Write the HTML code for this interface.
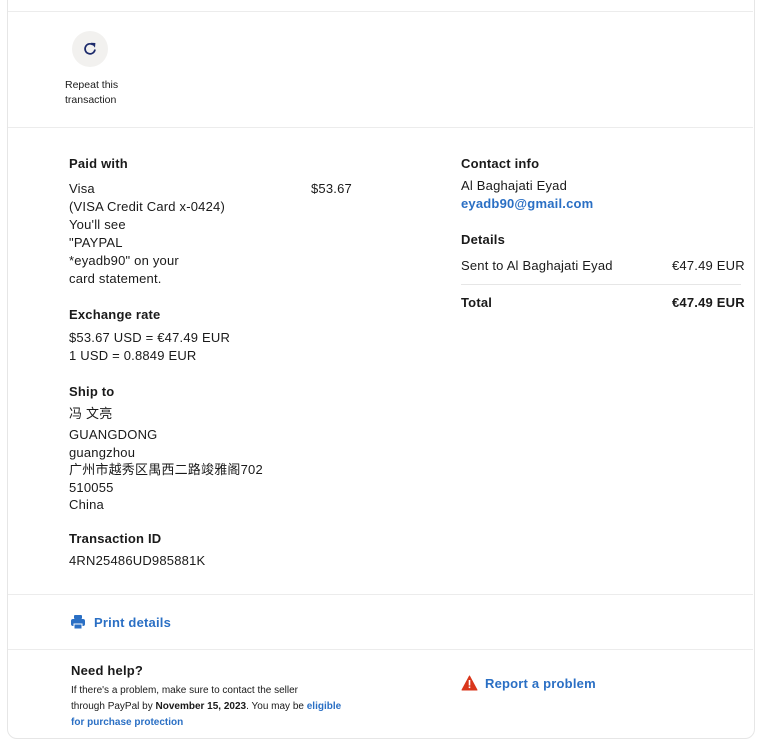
<!DOCTYPE html>
<html><head><meta charset="utf-8"><style>
body{margin:0;width:764px;height:740px;background:#fff;font-family:"Liberation Sans","Noto Sans CJK SC",sans-serif;color:#1a1a1a;position:relative;overflow:hidden}
.card{position:absolute;left:7px;top:-10px;width:746px;height:747px;border:1px solid #e6e6e6;border-radius:10px;background:#fff}
.hr{position:absolute;left:8px;width:745px;height:1px;background:#ececec}
.a{position:absolute;font-size:13px;line-height:18px;white-space:nowrap;letter-spacing:0.2px}
.b{font-weight:bold}
.l{color:#2a6fc4;font-weight:bold}
.s{font-size:10px;line-height:16px;letter-spacing:0}
</style></head><body>
<div class="card"></div>
<div class="hr" style="top:11px"></div>
<div class="hr" style="top:127px"></div>
<div class="hr" style="top:594px"></div>
<div class="hr" style="top:649px"></div>
<div style="position:absolute;left:72px;top:31px;width:36px;height:36px;border-radius:50%;background:#f2f1ef"></div>
<svg style="position:absolute;left:82px;top:41px" width="16" height="16" viewBox="0 0 16 16"><path d="M13 8.5A5 5 0 1 1 11 3.8" fill="none" stroke="#1c2a6b" stroke-width="1.7"/><path d="M8.8 1.8l4.6 0.2-0.4 4.6z" fill="#1c2a6b"/></svg>
<div class="a s" style="left:65px;top:78px;font-size:10.5px;line-height:15px">Repeat this<br>transaction</div>

<div class="a b" style="left:69px;top:155px">Paid with</div>
<div class="a" style="left:69px;top:180px">Visa<br>(VISA Credit Card x-0424)<br>You'll see<br>"PAYPAL<br>*eyadb90" on your<br>card statement.</div>
<div class="a" style="left:311px;top:180px">$53.67</div>
<div class="a b" style="left:69px;top:306px">Exchange rate</div>
<div class="a" style="left:69px;top:329px">$53.67 USD = €47.49 EUR<br>1 USD = 0.8849 EUR</div>
<div class="a b" style="left:69px;top:383px">Ship to</div>
<div class="a" style="left:69px;top:405px">冯 文亮</div>
<div class="a" style="left:69px;top:426px;line-height:17.5px">GUANGDONG<br>guangzhou<br>广州市越秀区禺西二路竣雅阁702<br>510055<br>China</div>
<div class="a b" style="left:69px;top:530px">Transaction ID</div>
<div class="a" style="left:69px;top:552px">4RN25486UD985881K</div>

<div class="a b" style="left:461px;top:155px">Contact info</div>
<div class="a" style="left:461px;top:177px">Al Baghajati Eyad</div>
<div class="a l" style="left:461px;top:195px">eyadb90@gmail.com</div>
<div class="a b" style="left:461px;top:231px">Details</div>
<div class="a" style="left:461px;top:257px">Sent to Al Baghajati Eyad</div>
<div class="a" style="left:672px;top:257px">€47.49 EUR</div>
<div style="position:absolute;left:461px;top:284px;width:280px;height:1px;background:#e6e6e6"></div>
<div class="a b" style="left:461px;top:294px">Total</div>
<div class="a b" style="left:672px;top:294px">€47.49 EUR</div>

<svg style="position:absolute;left:70px;top:614px" width="16" height="16" viewBox="0 0 16 16"><rect x="4" y="1" width="8" height="4" rx="1" fill="#2a6fc4"/><rect x="1" y="5" width="14" height="7" rx="2" fill="#2a6fc4"/><rect x="4" y="10" width="8" height="5" fill="#2a6fc4" stroke="#fff" stroke-width="1"/></svg>
<div class="a l" style="left:94px;top:614px">Print details</div>

<div class="a b" style="left:71px;top:662px">Need help?</div>
<div class="a s" style="left:71px;top:683px">If there's a problem, make sure to contact the seller<br>through PayPal by <b>November 15, 2023</b>. You may be <span class="l">eligible</span><br><span class="l">for purchase protection</span></div>
<svg style="position:absolute;left:461px;top:675px" width="17" height="16" viewBox="0 0 17 16"><path d="M8.5 1L16 15H1z" fill="#d9361b" stroke="#d9361b" stroke-linejoin="round"/><rect x="7.7" y="5" width="1.6" height="5.5" fill="#fff"/><rect x="7.7" y="11.5" width="1.6" height="1.6" fill="#fff"/></svg>
<div class="a l" style="left:485px;top:675px">Report a problem</div>
</body></html>
